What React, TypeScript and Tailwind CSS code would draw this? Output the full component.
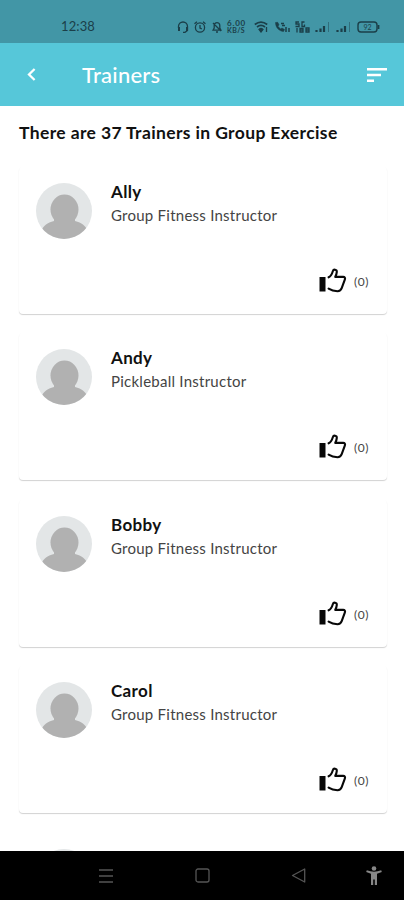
import { ReactNode } from 'react';

type Trainer = {
  name: string;
  role: string;
  likes: number;
};

const trainers: Trainer[] = [
  { name: 'Ally', role: 'Group Fitness Instructor', likes: 0 },
  { name: 'Andy', role: 'Pickleball Instructor', likes: 0 },
  { name: 'Bobby', role: 'Group Fitness Instructor', likes: 0 },
  { name: 'Carol', role: 'Group Fitness Instructor', likes: 0 },
];

const StatusIcon = ({ width, children }: { width: number; children: ReactNode }) => (
  <svg
    width={width}
    height={12}
    viewBox={`0 0 ${width} 12`}
    fill="none"
    stroke="currentColor"
    strokeWidth={1.3}
    className="shrink-0"
  >
    {children}
  </svg>
);

const Signal = () => (
  <StatusIcon width={15}>
    <path d="M1.5 11V9M5.5 11V7.5M9 11V5" strokeWidth={2.2} />
    <path d="M13.5 11V1" strokeWidth={1} opacity={0.45} />
  </StatusIcon>
);

const StatusBar = () => (
  <div className="flex h-[43px] shrink-0 items-start bg-[#4296a6] pl-[61px] pt-[20px] text-[#1b3f49]">
    <span className="w-[116px] text-[13px] leading-[13px] tracking-[0.1px]">12:38</span>
    <div className="flex items-center">
      {/* Headset */}
      <div className="w-[17px]">
        <StatusIcon width={12}>
          <path d="M1.5 7V5.5a4.5 4.5 0 0 1 9 0V9.5L8 11.3H6" />
          <path d="M2 6v4M10 6v4" strokeWidth={2} />
        </StatusIcon>
      </div>
      {/* Alarm */}
      <div className="w-[18px]">
        <StatusIcon width={12}>
          <circle cx="6" cy="6.5" r="4.6" />
          <path d="M.5 2.8 3 .8M11.5 2.8 9 .8M6 4v3l1.8.8" />
        </StatusIcon>
      </div>
      {/* Muted bell */}
      <div className="w-[15px]">
        <StatusIcon width={10}>
          <path d="M1 9.2h8L7.8 7V4.5a2.8 2.8 0 0 0-5.6 0V7zM4 11h2M1 2l8 8" />
        </StatusIcon>
      </div>
      <div className="flex w-[27px] flex-col font-bold">
        <span className="text-[8px] leading-[7px] tracking-[0.8px]">6.00</span>
        <span className="text-[7px] leading-[7px] tracking-[0.4px]">KB/S</span>
      </div>
      {/* Wi-Fi */}
      <div className="w-[20px]">
        <StatusIcon width={15}>
          <path d="M.8 3.5c4-3 8.4-3 12.4 0M3 6c2.5-2 5.5-2 8 0" strokeWidth={1.7} />
          <path d="M5 8.4a3 3 0 0 1 4 0L7 11z" fill="currentColor" />
          <path d="M12.5 6v5" />
        </StatusIcon>
      </div>
      {/* Call over Wi-Fi */}
      <div className="w-[21px]">
        <StatusIcon width={16}>
          <path
            d="M1.5 1.5c0 5 3.5 8.5 8 9l1-2-2.5-1.5-1.500 1L4 5.300l1-1.500-1.300-2.500z"
            fill="currentColor"
            strokeWidth={0.5}
          />
          <path d="M7 2.500h3M8 4.500h3M12 6v5M15 7v4" strokeWidth={1.5} />
        </StatusIcon>
      </div>
      {/* Network type */}
      <div className="w-[20px]">
        <StatusIcon width={15}>
          <path d="M4 1H1v2h3v2.500H.5M9.500 1H7v4.500h2.500V3.500M2 7v4.500M5 7.500h3v3.500H5zM5 9.200h3M11 7h3v4h-3zM11 9h3" />
        </StatusIcon>
      </div>
      <div className="w-[21px]">
        <Signal />
      </div>
      <div className="w-[21px]">
        <Signal />
      </div>
      {/* Battery */}
      <svg width="23" height="12" viewBox="0 0 23 12" fill="none" stroke="currentColor">
        <rect x="1" y="1" width="19" height="10" rx="3" strokeWidth="1.4" />
        <path d="M21.5 4v4" strokeWidth="1.8" />
        <text x="10.5" y="8.5" textAnchor="middle" fontSize="7" stroke="none" fill="currentColor">
          92
        </text>
      </svg>
    </div>
  </div>
);

const Header = () => (
  <header className="flex h-[63px] shrink-0 items-center bg-[#56c7d9] pl-[27px] pr-[17px] text-white">
    <svg width="9" height="13" viewBox="0 0 9 13" fill="none" stroke="currentColor" strokeWidth="2.3">
      <path d="M7.6 1 2 6.5 7.6 12" />
    </svg>
    <h1 className="ml-[46px] flex-1 text-[22px] font-medium leading-[28px] tracking-[0.25px]">Trainers</h1>
    {/* Sort */}
    <svg width="20" height="14" viewBox="0 0 20 14" fill="currentColor">
      <path d="M0 0h20v2.5H0zM0 5.7h14v2.5H0zM0 11.4h7v2.5H0z" />
    </svg>
  </header>
);

const Avatar = () => (
  <div className="h-14 w-14 shrink-0 overflow-hidden rounded-full bg-[#e3e6e7]">
    <svg width="56" height="56" viewBox="0 0 56 56" fill="#b1b1b1">
      <ellipse cx="28.5" cy="26.5" rx="14" ry="15" />
      <path d="M18 33h21v5c7 1.5 10 5 12.5 9v9h-46v-9c2.500-4 5.500-7.500 12.500-9z" />
    </svg>
  </div>
);

const ThumbUp = () => (
  <svg width="28" height="25" viewBox="0 0 28 25" fill="none">
    <path d="M.5 9h6v14.5h-6z" fill="#080808" />
    <path
      d="M9.600 9.300C12 8.200 13 6 13.800 3.200c.7-2.400 4.200-1.800 4 .7-.1 1.800-.7 3.300-1.600 5h8c1.500 0 2.200 1.100 1.700 2.500l-3.200 8.800c-.7 2-2.200 3-4.200 3-3.500-.1-6.100-.8-8.900-2.600"
      stroke="#080808"
      strokeWidth="2.1"
      strokeLinecap="round"
      strokeLinejoin="round"
    />
  </svg>
);

const TrainerCard = ({ trainer }: { trainer: Trainer }) => (
  <div className="flex h-[147px] shrink-0 flex-col justify-between rounded-[4px] bg-white pl-[17px] pr-[18px] pt-[16px] pb-[21px] shadow-[0_1px_1px_rgba(0,0,0,0.18)]">
    <div className="flex gap-[19px]">
      <Avatar />
      <div className="-mt-px">
        <h3 className="text-[17px] font-bold leading-[20px] tracking-[0.35px] text-[#111]">{trainer.name}</h3>
        <p className="mt-[3px] text-[15px] leading-[20px] tracking-[0.25px] text-[#444]">{trainer.role}</p>
      </div>
    </div>
    <div className="flex items-center justify-end gap-[7px]">
      <ThumbUp />
      <span className="pt-[3px] text-[12px] leading-[16px] tracking-[0.5px] text-[#444]">({trainer.likes})</span>
    </div>
  </div>
);

const NavBar = () => (
  <nav className="flex h-[49px] shrink-0 items-center bg-black pl-[99px] text-[#555]">
    <svg width="14" height="14" viewBox="0 0 14 14" stroke="currentColor" strokeWidth="1.6" className="mr-[82px]">
      <path d="M0 1h14M0 7h14M0 13h14" />
    </svg>
    <svg width="15" height="15" viewBox="0 0 15 15" fill="none" stroke="currentColor" strokeWidth="1.3" className="mr-[81px]">
      <rect x="1" y="1" width="13" height="13" rx="2" />
    </svg>
    <svg width="16" height="15" viewBox="0 0 16 15" fill="none" stroke="currentColor" strokeWidth="1.3" className="mr-[59px]">
      <path d="M13.7 1v13L1.5 7.5z" strokeLinejoin="round" />
    </svg>
    {/* Accessibility */}
    <svg width="16" height="19" viewBox="0 0 16 19" fill="#878787">
      <circle cx="8" cy="2.5" r="2.3" />
      <path d="M.8 4.3Q8 7 15.2 4.3l.6 1.8-4.8 1.7V19H8.800v-5.500H7.200V19H5V7.800L.2 6.100z" />
    </svg>
  </nav>
);

const App = () => {
  return (
    <div className="flex h-[900px] w-[404px] flex-col overflow-hidden bg-white font-['Lato',sans-serif]">
      <StatusBar />
      <Header />
      <main className="flex min-h-0 flex-1 flex-col overflow-hidden pl-[19px] pr-[17px]">
        <h2 className="mt-[17px] shrink-0 whitespace-nowrap text-[17.5px] font-bold leading-[20px] tracking-[0.37px] text-[#111]">
          There are 37 Trainers in Group Exercise
        </h2>
        <div className="mt-[24px] flex shrink-0 flex-col gap-[19.3px]">
          {trainers.map((trainer) => (
            <TrainerCard key={trainer.name} trainer={trainer} />
          ))}
          {/* Top edge of the next avatar, cut off by the nav bar */}
          <div className="pl-[17px] pt-[17px]">
            <Avatar />
          </div>
        </div>
      </main>
      <NavBar />
    </div>
  );
};

export default App;
